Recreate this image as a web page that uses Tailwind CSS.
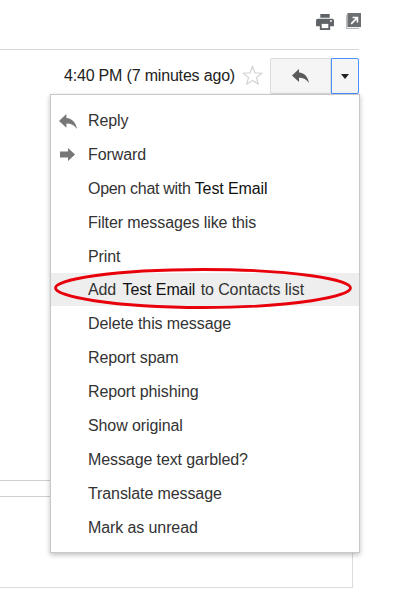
<!DOCTYPE html>
<html lang="en">
<head>
    <meta charset="UTF-8">
    <meta name="viewport" content="width=device-width, initial-scale=1.0">
    <title>Message menu</title>
    <script src="https://cdn.jsdelivr.net/npm/@tailwindcss/browser@4"></script>
</head>
<body class="bg-white overflow-hidden font-['Liberation_Sans',Arial,sans-serif]">
    <div class="relative w-[403px] h-[614px]">
        <!-- top toolbar -->
        <div class="h-[50px] w-[359px] border-b border-[#d8d8d8] flex justify-end items-start pt-[13px] gap-[12px]">
            <svg class="w-[18px] h-[16px] mt-[1px]" viewBox="0 0 19 17"><path fill="#5f6368" d="M4.500 0h10v4h-10zM1.800 5h15.400c1 0 1.800.8 1.800 1.800V13h-4v4H4v-4H0V6.800C0 5.800.8 5 1.800 5z"/><path fill="#fff" d="M6 10.500h7V15H6z"/><circle cx="15.800" cy="7.500" r="1" fill="#fff"/></svg>
            <svg class="w-[15px] h-[16px] mr-[-2px]" viewBox="0 0 16 17"><path fill="#b5b7b9" d="M0 2h1v14h13v1H0z"/><path fill="#6b6f72" d="M1.500 0H16v15H1.500z"/><path fill="none" stroke="#fff" stroke-width="1.700" d="M5.500 11.500l6-6M7 4.800h5.200V10"/></svg>
        </div>

        <!-- message header -->
        <div class="w-[359px] h-[44px] pt-[8px] flex justify-end items-start">
            <span class="text-[16px] leading-[36px] text-[#222] tracking-[-0.18px]">4:40 PM (7 minutes ago)</span>
            <svg class="w-[21px] h-[20px] ml-[7px] mr-[7px] mt-[7px]" viewBox="0 0 21 20"><path fill="none" stroke="#d6d6d6" stroke-width="1.300" d="M10.500 1.500l2.500 6.300 6.700.4-5.200 4.300 1.700 6.500-5.700-3.600-5.700 3.600 1.700-6.500-5.200-4.300 6.700-.4z"/></svg>
            <div class="w-[61px] h-[36px] bg-[#f5f5f5] border border-[#dcdcdc] rounded-l-[2px] flex items-center justify-center">
                <svg class="w-[17px] h-[14px]" viewBox="0 0 17 14"><path fill="#5a5a5a" d="M7 0v3.600c5.500.5 8.800 4 10 10.400-2.500-3.500-5.500-5.200-10-5.200V13L0 6.500z"/></svg>
            </div>
            <div class="w-[28px] h-[36px] bg-[#f5f5f5] border border-[#4d90fe] rounded-r-[2px] flex items-center justify-center">
                <div class="w-0 h-0 border-x-[4.500px] border-x-transparent border-t-[5px] border-t-[#222]"></div>
            </div>
        </div>

        <!-- message body behind the menu -->
        <div class="absolute left-0 top-[480px] w-[60px] h-[17px] border-y border-[#d0d0d0]"></div>
        <div class="absolute left-0 top-[497px] w-[353px] h-[91px] border-r border-b border-[#dcdcdc]"></div>

        <!-- dropdown -->
        <div class="absolute left-[50px] top-[94px] w-[310px] h-[459px] bg-white border border-[#c8c8c8] shadow-[0_2px_5px_rgba(0,0,0,0.25)] pt-[9px] text-[16px] leading-[34px] text-[#333] tracking-[-0.1px]">
            <div class="h-[34px] pl-[37px] relative">
                <svg class="absolute left-[8px] top-[10px] w-[18px] h-[15px]" viewBox="0 0 17 14"><path fill="#777" d="M7 0v3.600c5.500.5 8.800 4 10 10.400-2.500-3.500-5.500-5.200-10-5.200V13L0 6.500z"/></svg>
                Reply
            </div>
            <div class="h-[34px] pl-[37px] relative">
                <svg class="absolute left-[9px] top-[10px] w-[15px] h-[13px]" viewBox="0 0 15 13"><path fill="#777" d="M0 3.500h8V0l7 6.500L8 13V9.500H0z"/></svg>
                Forward
            </div>
            <div class="h-[34px] pl-[37px]"><span class="tracking-[-0.3px]">Open chat with </span><span class="text-[#111]">Test Email</span></div>
            <div class="h-[34px] pl-[37px]">Filter messages like this</div>
            <div class="h-[33px] pl-[37px]">Print</div>
            <div class="h-[33px] mb-[1px] pl-[37px] leading-[33px] bg-[#eeeeee]">Add <span class="text-[#111] ml-[2px] mr-[1px]">Test Email</span> to Contacts list</div>
            <div class="h-[34px] pl-[37px]">Delete this message</div>
            <div class="h-[34px] pl-[37px]">Report spam</div>
            <div class="h-[34px] pl-[37px]">Report phishing</div>
            <div class="h-[34px] pl-[37px]">Show original</div>
            <div class="h-[34px] pl-[37px]">Message text garbled?</div>
            <div class="h-[34px] pl-[37px]">Translate message</div>
            <div class="h-[34px] pl-[37px]">Mark as unread</div>
        </div>

        <!-- red annotation -->
        <svg class="absolute left-[50px] top-[264px] w-[306px] h-[50px]" viewBox="0 0 306 50"><path fill="none" stroke="#e8000b" stroke-width="2.800" d="M5.500 24C5.500 16 60 5.500 153 5.500S300.500 16 300.500 24 246 43.500 153 43.500 5.500 32 5.500 24z"/></svg>
    </div>
</body>
</html>
